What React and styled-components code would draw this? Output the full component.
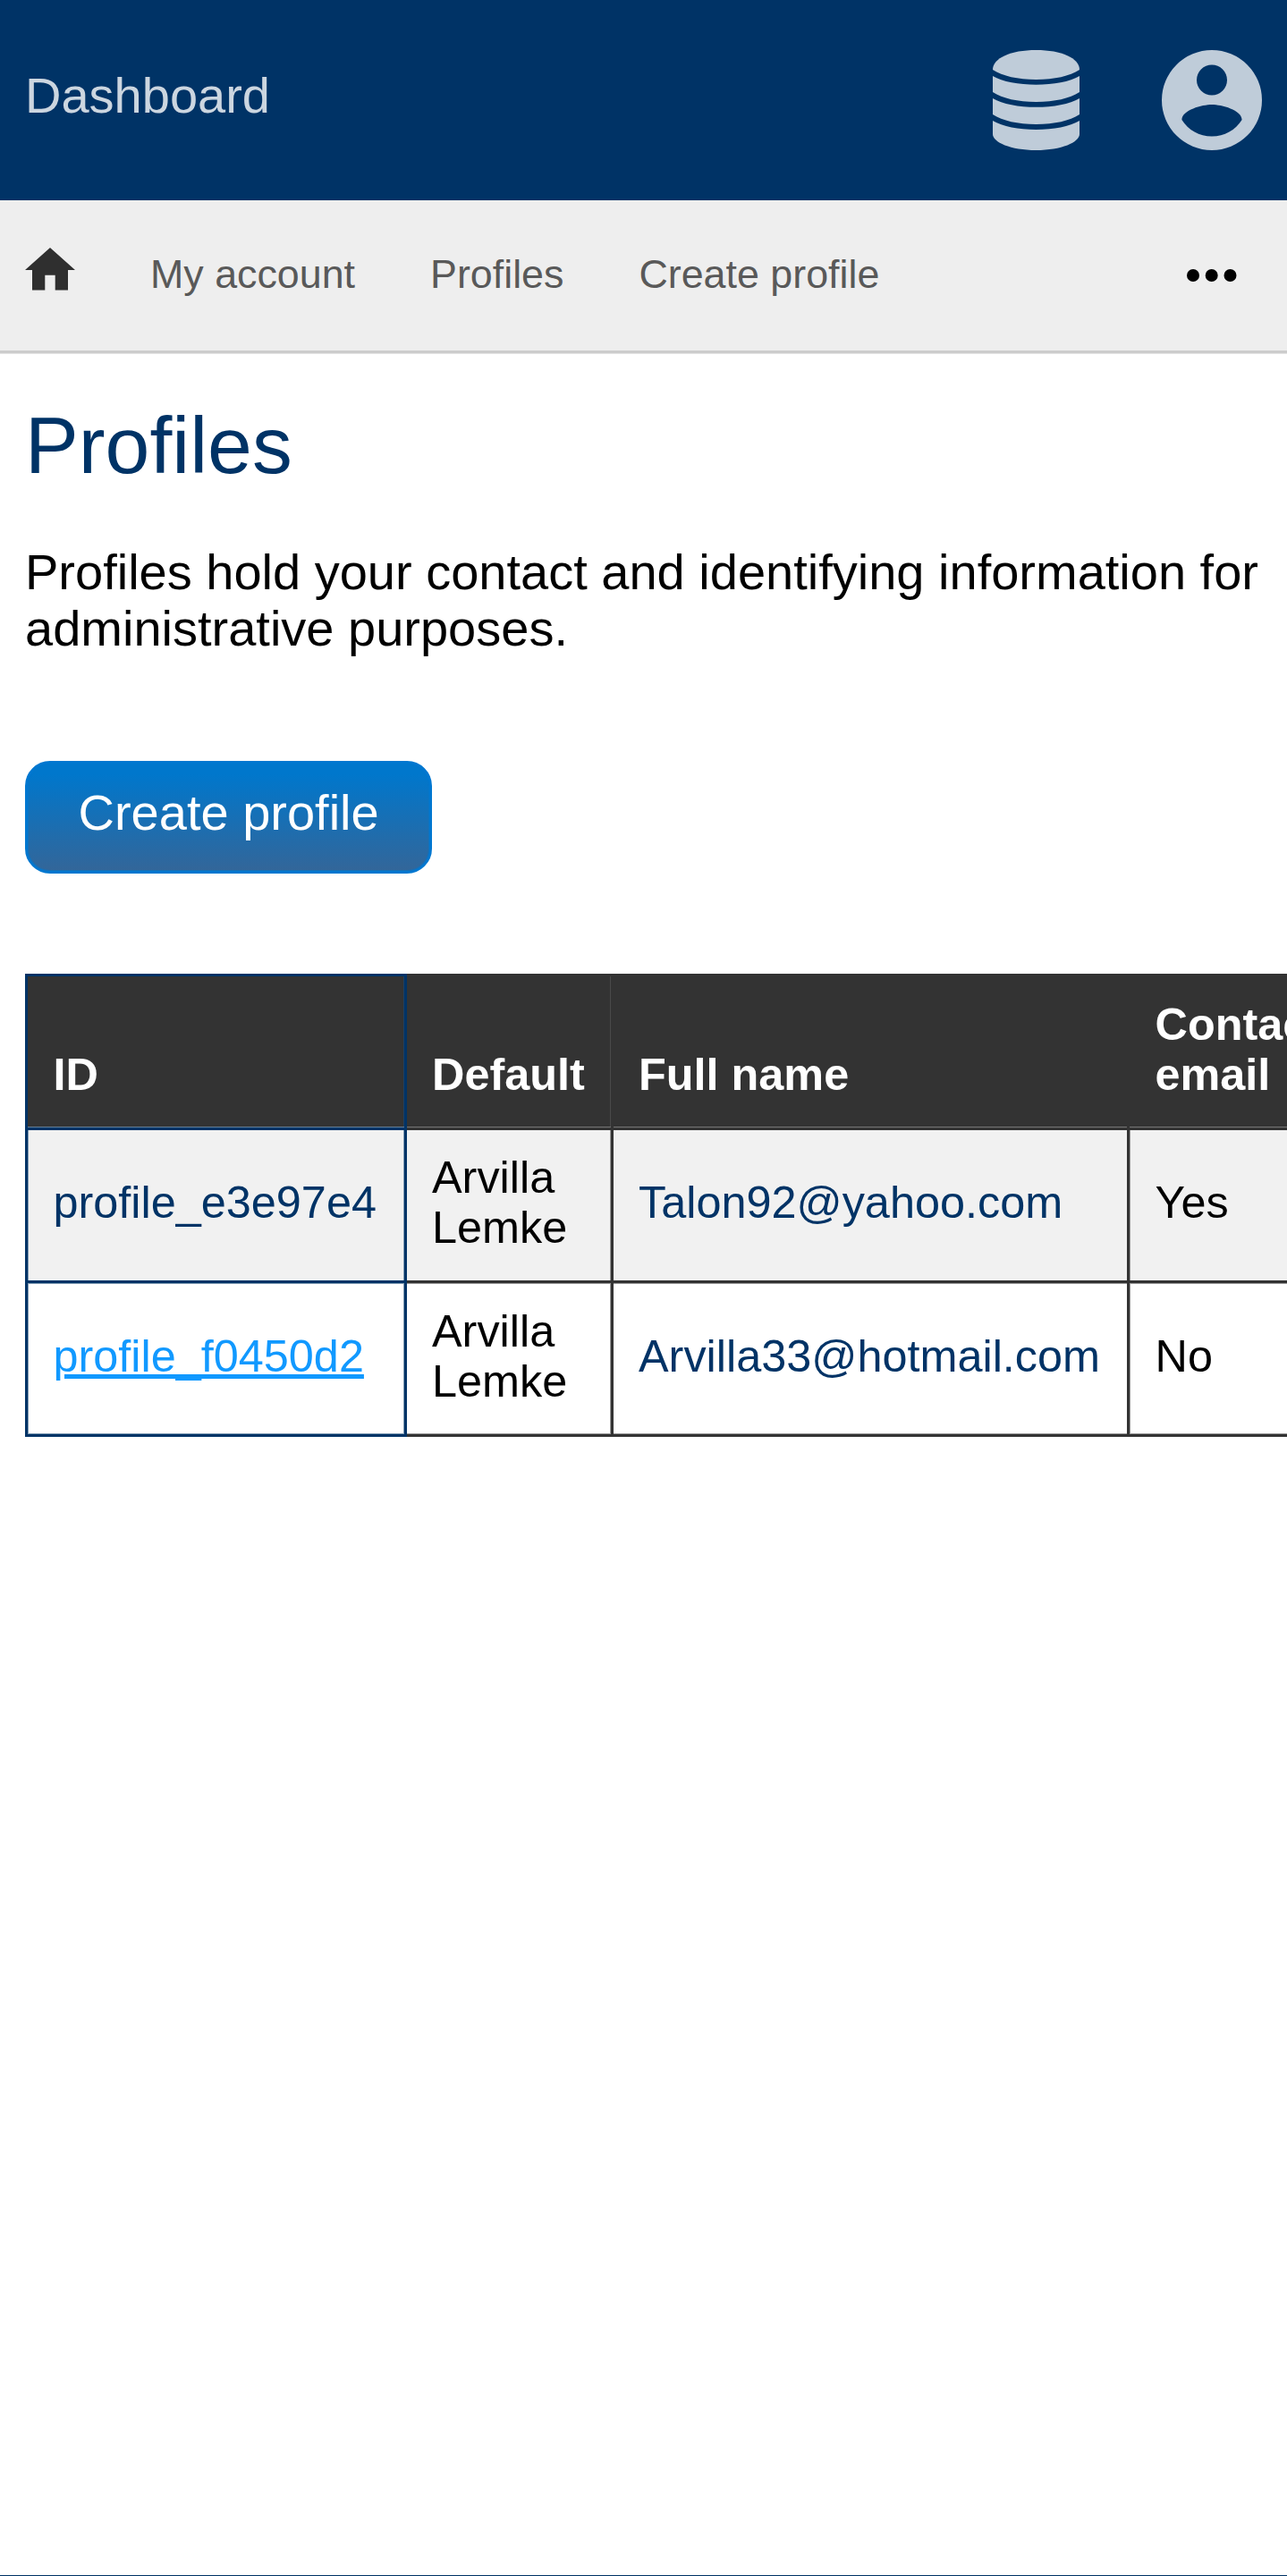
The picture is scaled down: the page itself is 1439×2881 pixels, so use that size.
import React from 'react';
import styled, { createGlobalStyle } from 'styled-components';

const navy = '#003366';
const dark = '#333333';

const GlobalStyle = createGlobalStyle`
  *, *::before, *::after { box-sizing: border-box; }
  html { overflow: hidden; }
  body {
    margin: 0;
    background: #fff;
    color: #000;
    font-family: "Liberation Sans", Arial, sans-serif;
    font-size: 56px;
  }
  a { text-decoration: none; }
`;

const Page = styled.div`
  display: flex;
  flex-direction: column;
  width: 1439px;
  height: 2881px;
  overflow: hidden;
`;

const Header = styled.header`
  display: flex;
  align-items: center;
  justify-content: space-between;
  height: 224px;
  padding: 0 28px;
  background: ${navy};
`;

const Brand = styled.a`
  color: #ccd6e0;
  font-size: 56px;
  line-height: 64px;
  padding-bottom: 11px;
`;

const HeaderIcons = styled.div`
  display: flex;
  align-items: center;
  gap: 92px;
  color: #bfccd9;
  svg { display: block; fill: currentColor; }
`;

const Nav = styled.nav`
  display: flex;
  align-items: center;
  height: 171px;
  padding: 0 56px 0 28px;
  background: #eeeeee;
  border-bottom: 3px solid #cccccc;
  box-shadow: 0 1px 0 #e5e5e5;
`;

const HomeLink = styled.a`
  display: flex;
  margin: 0 84px 14px 0;
`;

const NavLink = styled.a`
  margin-right: 84px;
  padding-bottom: 4px;
  color: #595959;
  font-size: 44.8px;
  line-height: 52px;
`;

const MoreButton = styled.span`
  display: flex;
  margin-left: auto;
`;

const Main = styled.main`
  flex: 1;
  padding: 0 0 0 28px;
`;

const Title = styled.h1`
  margin: 52px 0 0;
  color: ${navy};
  font-size: 89.6px;
  font-weight: 400;
  line-height: 102px;
`;

const Intro = styled.p`
  width: 1383px;
  margin: 59px 0 0;
  font-size: 56px;
  line-height: 63px;
`;

const CreateButton = styled.a`
  display: block;
  width: 455px;
  height: 126px;
  margin-top: 117px;
  padding-left: 56.5px;
  border: 3px solid #0077d0;
  border-radius: 28px;
  background: linear-gradient(#0077cc 10%, #336699);
  box-shadow: inset 0 0 0 1px rgba(0, 119, 208, 0.5);
  color: #fff;
  font-size: 56px;
  line-height: 109px;
`;

const TableClip = styled.div`
  margin-top: 112px;
  overflow: hidden;
`;

const Table = styled.table`
  width: 1615px;
  table-layout: fixed;
  border-collapse: separate;
  border-spacing: 0;
  font-size: 50.4px;
  line-height: 56px;
`;

const Col = styled.col`
  width: ${(p) => p.$width}px;
`;

const Row = styled.tr`
  height: ${(p) => p.$height}px;
  background: ${(p) => p.$fill};
`;

const HeadCell = styled.th`
  padding: 0 27px 31px 28px;
  border: 0 solid ${(p) => (p.$first ? navy : dark)};
  border-width: 3px 3px 3px ${(p) => (p.$first ? 3 : 0)}px;
  box-shadow: inset 0 -1px 0 ${(p) => (p.$first ? '#667f99' : '#777777')}, inset ${(p) => (p.$lineLeft ? 0 : -1)}px 0 0 ${(p) => (p.$first ? '#1f3f60' : '#4a4a4a')};
  color: #fff;
  font-weight: 700;
  text-align: left;
  vertical-align: bottom;
  &:first-child, &:last-child { padding-left: 28.5px; }
`;

const Cell = styled.td`
  padding: 0 10px 6px 28px;
  border: 0 solid ${(p) => (p.$first ? navy : dark)};
  border-width: 0 3px 3px ${(p) => (p.$first ? 3 : 0)}px;
  box-shadow: ${(p) => {
    const tint = p.$first ? '#7f99b2' : '#999999';
    const lines = [];
    if (p.$edges) lines.push(`inset 0 1px 0 ${tint}`, `inset 0 -1px 0 ${tint}`);
    if (p.$first || p.$lineLeft) lines.push(`inset 1px 0 0 ${tint}`);
    if (p.$lineRight) lines.push(`inset -1px 0 0 ${tint}`);
    return lines.length ? lines.join(', ') : 'none';
  }};
  vertical-align: middle;
  &:first-child, &:last-child { padding-left: 28.5px; }
`;

const CellLink = styled.a`
  color: ${(p) => (p.$active ? '#1199ff' : navy)};
  text-decoration: ${(p) => (p.$active ? 'underline' : 'none')};
`;

const BottomRule = styled.footer`
  height: 1px;
  background: ${navy};
`;

const DatabaseIcon = () => (
  <svg width="97" height="112" viewBox="0 0 97 112">
    <path d="M0 22C0 9 20 0 48.500 0S97 9 97 22C86 29 69 33 48.500 33S11 29 0 22Z" />
    <path d="M0 29C11 35.500 29 38.700 48.500 38.700S86 35.500 97 29V47C86 54 69 58 48.500 58S11 54 0 47Z" />
    <path d="M0 54C11 60.500 29 63.800 48.500 63.800S86 60.500 97 54V72C86 79 69 83 48.500 83S11 79 0 72Z" />
    <path d="M0 79C11 85.500 29 89 48.500 89S86 85.500 97 79V94C97 103 77 112 48.500 112S0 103 0 94Z" />
  </svg>
);

const UserIcon = () => (
  <svg width="112" height="112" viewBox="0 0 112 112">
    <path
      fillRule="evenodd"
      d="M56 0a56 56 0 1 0 0 112A56 56 0 0 0 56 0ZM56 16.500a17 17 0 1 1 0 34a17 17 0 0 1 0-34ZM56 96.500C42 96.500 29.500 89.500 22.400 78C22.600 67 45 61 56 61S89.400 67 89.600 78C82.500 89.500 70 96.500 56 96.500Z"
    />
  </svg>
);

const HomeIcon = () => (
  <svg width="56" height="48" viewBox="0 0 56 48">
    <path fill="#2f2f2f" d="M28 0 56 25H48V47.500H33.700V30.700H22.300V47.500H8V25H0Z" />
  </svg>
);

const MoreIcon = () => (
  <svg width="56" height="14" viewBox="0 0 56 14">
    <circle cx="7" cy="7" r="7" />
    <circle cx="27.700" cy="7" r="7" />
    <circle cx="48.500" cy="7" r="7" />
  </svg>
);

const profiles = [
  { id: 'profile_e3e97e4', owner: 'Arvilla Lemke', email: 'Talon92@yahoo.com', contact: 'Yes', height: 171, fill: '#f1f1f1' },
  { id: 'profile_f0450d2', owner: 'Arvilla Lemke', email: 'Arvilla33@hotmail.com', contact: 'No', height: 172, fill: '#ffffff', edges: true, active: true },
];

export default function App() {
  return (
    <>
      <GlobalStyle />
      <Page>
        <Header>
          <Brand>Dashboard</Brand>
          <HeaderIcons>
            <DatabaseIcon />
            <UserIcon />
          </HeaderIcons>
        </Header>
        <Nav>
          <HomeLink><HomeIcon /></HomeLink>
          <NavLink>My account</NavLink>
          <NavLink>Profiles</NavLink>
          <NavLink>Create profile</NavLink>
          <MoreButton><MoreIcon /></MoreButton>
        </Nav>
        <Main>
          <Title>Profiles</Title>
          <Intro>Profiles hold your contact and identifying information for administrative purposes.</Intro>
          <CreateButton>Create profile</CreateButton>
          <TableClip>
            <Table>
              <colgroup>
                <Col $width={427} />
                <Col $width={231} />
                <Col $width={577} />
                <Col $width={380} />
              </colgroup>
              <thead>
                <Row $height={175} $fill={dark}>
                  <HeadCell $first>ID</HeadCell>
                  <HeadCell>Default</HeadCell>
                  <HeadCell $lineLeft>Full name</HeadCell>
                  <HeadCell $lineLeft>Contact<br />email</HeadCell>
                </Row>
              </thead>
              <tbody>
                {profiles.map((p) => (
                  <Row key={p.id} $height={p.height} $fill={p.fill}>
                    <Cell $first $lineRight $edges={p.edges}>
                      <CellLink $active={p.active}>{p.id}</CellLink>
                    </Cell>
                    <Cell $lineRight $edges={p.edges}>{p.owner}</Cell>
                    <Cell $edges={p.edges}><CellLink>{p.email}</CellLink></Cell>
                    <Cell $lineLeft $edges={p.edges}>{p.contact}</Cell>
                  </Row>
                ))}
              </tbody>
            </Table>
          </TableClip>
        </Main>
        <BottomRule />
      </Page>
    </>
  );
}
